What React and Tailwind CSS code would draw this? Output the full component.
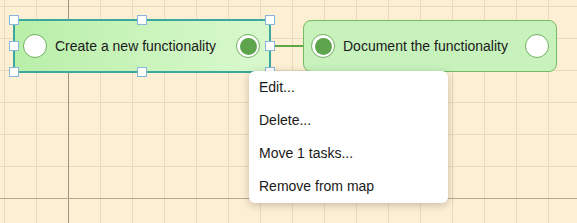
import React from "react";

function Handle({ x, y }) {
  return (
    <div
      className="absolute w-[10px] h-[10px] bg-white border border-[#86b8dc]"
      style={{ left: x - 5, top: y - 5 }}
    />
  );
}

function EmptyPort() {
  return <div className="w-[24px] h-[24px] shrink-0 rounded-full bg-white border-[1.5px] border-[#6fae5e]" />;
}

function FilledPort() {
  return (
    <div className="w-[24px] h-[24px] shrink-0 rounded-full bg-white border-[1.5px] border-[#6fae5e] flex items-center justify-center">
      <div className="w-[17px] h-[17px] rounded-full bg-[#5ea44c]" />
    </div>
  );
}

export default function App() {
  const handles = [
    [14, 20], [142, 20], [270, 20],
    [14, 46], [270, 46],
    [14, 72], [142, 72], [270, 72],
  ];
  return (
    <div
      className="relative w-[577px] h-[223px] overflow-hidden bg-[#fdefd3] bg-[linear-gradient(to_right,#ead9ba_1px,transparent_1px),linear-gradient(to_bottom,#ead9ba_1px,transparent_1px)] bg-[size:32px_32px] bg-[position:4px_6px] font-['Liberation_Sans',Arial,sans-serif] text-[14px] text-[#1a1a1a]"
    >
      {/* axes */}
      <div className="absolute left-[68px] top-0 w-px h-full bg-[#a09383]" />
      <div className="absolute left-0 top-[198px] w-full h-px bg-[#b8a78f]" />

      {/* edge */}
      <div className="absolute left-[270px] top-[45px] w-[42px] h-[2px] bg-[#5ea648]" />

      {/* node 1 (selected) */}
      <div className="absolute left-[13px] top-[19px] w-[258px] h-[54px] rounded-[6px] border-2 border-[#3ba79f] bg-[linear-gradient(to_right,#b9efa9,#d3f7c7_80%,#d8f8cc)] flex items-center pl-[8px] pr-[9px]">
        <EmptyPort />
        <span className="ml-[8px] whitespace-nowrap">Create a new functionality</span>
        <div className="ml-auto">
          <FilledPort />
        </div>
      </div>

      {/* node 2 */}
      <div className="absolute left-[303px] top-[20px] w-[254px] h-[52px] rounded-[8px] border border-[#76bb63] bg-[#c7f2bc] flex items-center pl-[7px] pr-[7px]">
        <FilledPort />
        <span className="ml-[8px] whitespace-nowrap">Document the functionality</span>
        <div className="ml-auto">
          <EmptyPort />
        </div>
      </div>

      {handles.map(([x, y], i) => (
        <Handle key={i} x={x} y={y} />
      ))}

      {/* context menu */}
      <div className="absolute left-[249px] top-[71px] w-[199px] h-[132px] rounded-[6px] bg-white shadow-[0_2px_8px_rgba(0,0,0,0.22)] flex flex-col">
        {["Edit...", "Delete...", "Move 1 tasks...", "Remove from map"].map((t) => (
          <div key={t} className="h-[33px] flex items-center pl-[10px] whitespace-nowrap">
            {t}
          </div>
        ))}
      </div>
    </div>
  );
}
